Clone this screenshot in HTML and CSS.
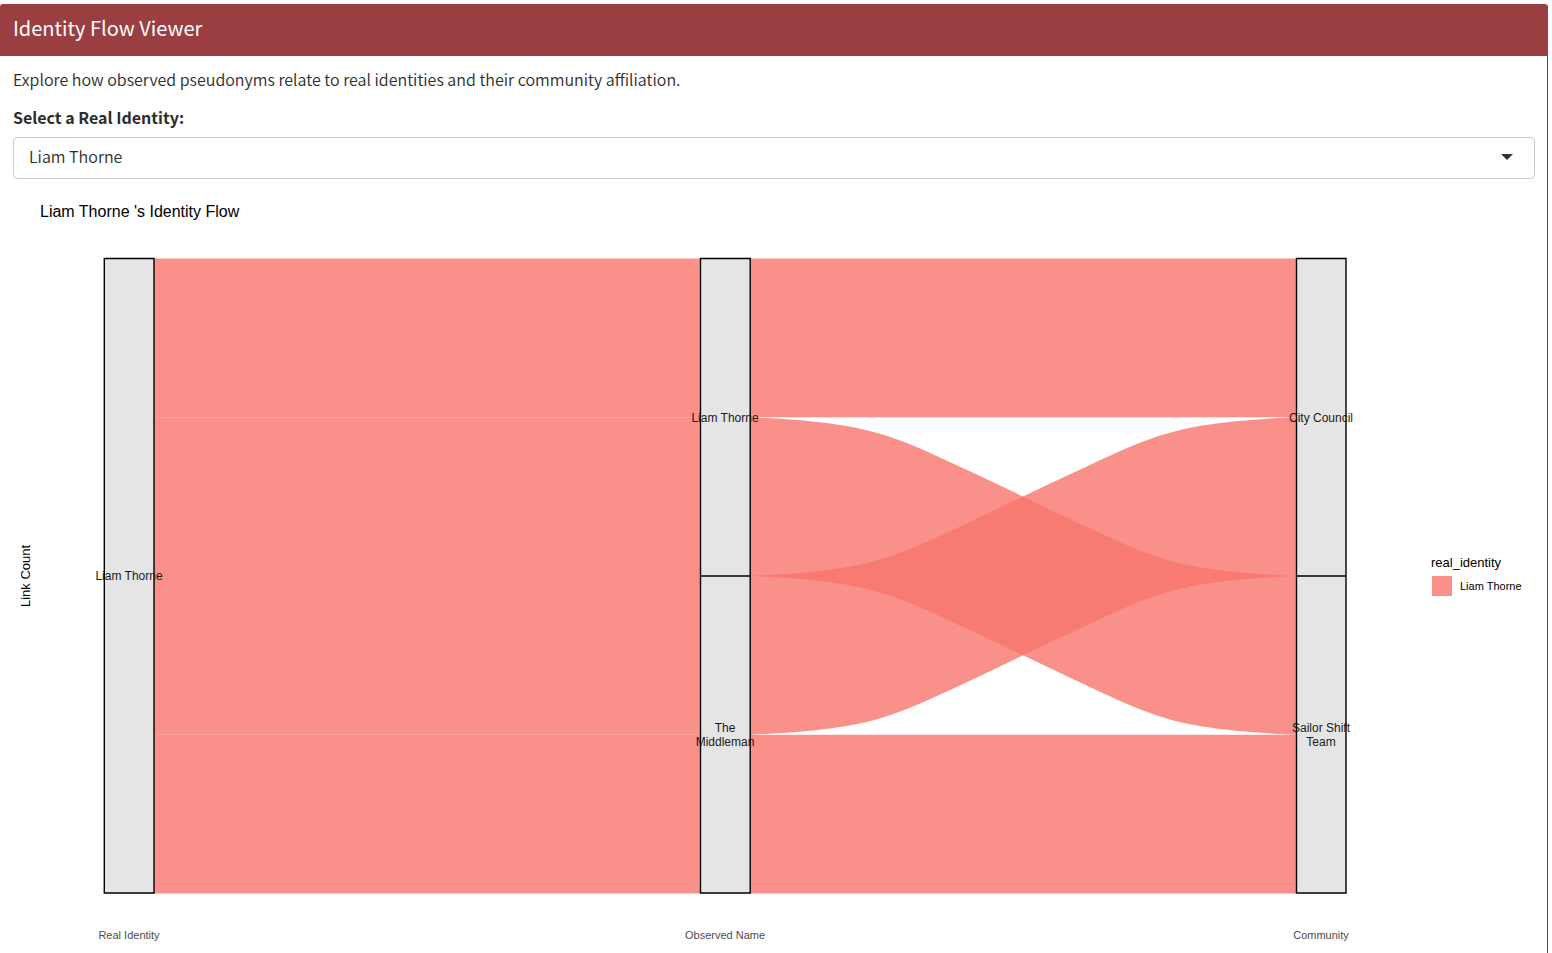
FILE: index.html
```html
<!DOCTYPE html>
<html lang="en">
<head>
<meta charset="utf-8">
<title>Identity Flow Viewer</title>
<link rel="stylesheet" href="styles.css">
</head>
<body>
<main class="card">
  <header class="card-header"><h1 class="card-title">Identity Flow Viewer</h1></header>
  <div class="card-body">
    <p class="intro">Explore how observed pseudonyms relate to real identities and their community affiliation.</p>
    <label class="field-label" for="identity">Select a Real Identity:</label>
    <div class="select-wrap">
      <select class="select" id="identity"><option>Liam Thorne</option></select>
      <svg class="caret" viewBox="0 0 12 6" aria-hidden="true"><path d="M0 0H12L6 6Z"/></svg>
    </div>
    <svg class="plot" viewBox="13 193 1522 760" role="img" aria-label="Liam Thorne's identity flow">
      <text class="plot-title" x="40" y="217">Liam Thorne 's Identity Flow</text>
      <text class="axis-title" text-anchor="middle" transform="translate(30 576) rotate(-90)">Link Count</text>
      <g class="flow">
        <path d="M154 258.5H700V417.3H154Z"/>
        <path d="M154 417.3H700V576H154Z"/>
        <path d="M154 576H700V734.7H154Z"/>
        <path d="M154 734.7H700V893.5H154Z"/>
        <path d="M750 258.5H1296V417.3H750Z"/>
        <path d="M750 417.3C782 418.6 815 420.9 845 425.7C875 430.5 900 439.5 928 452C958 465.5 990 480.7 1023 496.5C1056 512.6 1088 527.8 1118 541.3C1146 553.8 1171 562.8 1201 567.6C1231 572.4 1264 574.7 1296 576V734.7C1264 733.4 1231 731.1 1201 726.3C1171 721.5 1146 712.5 1118 700C1088 686.5 1056 671.3 1023 655.3C990 639.4 958 624.2 928 610.7C900 598.2 875 589.2 845 584.4C815 579.6 782 577.3 750 576Z"/>
        <path d="M1296 417.3C1264 418.6 1231 420.9 1201 425.7C1171 430.5 1146 439.5 1118 452C1088 465.5 1056 480.7 1023 496.5C990 512.6 958 527.8 928 541.3C900 553.8 875 562.8 845 567.6C815 572.4 782 574.7 750 576V734.7C782 733.4 815 731.1 845 726.3C875 721.5 900 712.5 928 700C958 686.5 990 671.3 1023 655.3C1056 639.4 1088 624.2 1118 610.7C1146 598.2 1171 589.2 1201 584.4C1231 579.6 1264 577.3 1296 576Z"/>
        <path d="M750 734.7H1296V893.5H750Z"/>
      </g>
      <g class="stratum">
        <path d="M104.3 258.5H154V893H104.3Z"/>
        <path d="M700.5 258.5H750.2V893H700.5ZM700.5 576H750.2"/>
        <path d="M1296.5 258.5H1346V893H1296.5ZM1296.5 576H1346"/>
      </g>
      <g class="node-label">
        <text x="129" y="580">Liam Thorne</text>
        <text x="725" y="422">Liam Thorne</text>
        <text x="725" y="732">The</text>
        <text x="725" y="746">Middleman</text>
        <text x="1321" y="422">City Council</text>
        <text x="1321" y="732">Sailor Shift</text>
        <text x="1321" y="746">Team</text>
      </g>
      <g class="tick-label">
        <text x="129" y="939">Real Identity</text>
        <text x="725" y="939">Observed Name</text>
        <text x="1321" y="939">Community</text>
      </g>
      <text class="legend-title" x="1431" y="567">real_identity</text>
      <rect class="legend-key" x="1432" y="576" width="20" height="20"/>
      <text class="legend-label" x="1460" y="590">Liam Thorne</text>
    </svg>
  </div>
</main>
</body>
</html>
```
FILE: styles.css
```css
* { box-sizing: border-box; }
body {
  margin: 0;
  padding: 4px 4px 0 0;
  background: #fff;
  color: #2d2d2d;
  font-family: "Noto Sans CJK SC", "Open Sans", sans-serif;
  font-size: 16px;
}
.card {
  min-height: calc(100vh - 4px);
  border-right: 1px solid #9a3e42;
  border-radius: 3px 3px 0 0;
  overflow: hidden;
}
.card-header { padding: 8px 13px 12px; background: #9a3e42; }
.card-title { margin: 0; color: #fff; font-size: 20px; font-weight: 400; line-height: 32px; }
.card-body { padding: 9px 12px 0 13px; }
.intro { margin: 0 0 10px; font-weight: 350; line-height: 28px; }
.field-label { display: block; font-weight: 700; line-height: 28px; margin-bottom: 6px; }
.select-wrap { display: grid; align-items: center; }
.select-wrap > * { grid-area: 1 / 1; }
.select {
  appearance: none;
  width: 100%;
  height: 42px;
  padding: 0 15px 4px;
  border: 1px solid #ccc;
  border-radius: 4px;
  background: #fff;
  color: #2d2d2d;
  font: inherit;
  font-weight: 350;
}
.caret { width: 12px; height: 6px; margin: 0 22px 2px 0; justify-self: end; pointer-events: none; fill: #333; }
.plot { display: block; width: 100%; margin-top: 14px; font-family: "Liberation Sans", Arial, sans-serif; }
.plot-title { font-size: 16px; fill: #000; }
.axis-title, .legend-title { font-size: 13px; fill: #000; }
.flow { fill: #f8766d; fill-opacity: .8; }
.stratum { fill: #e5e5e5; stroke: #000; stroke-width: 1.4; }
.node-label { font-size: 12px; fill: #1a1a1a; text-anchor: middle; }
.tick-label { font-size: 11px; fill: #4d4d4d; text-anchor: middle; }
.legend-key { fill: #f8766d; fill-opacity: .8; }
.legend-label { font-size: 11px; fill: #000; }
```
